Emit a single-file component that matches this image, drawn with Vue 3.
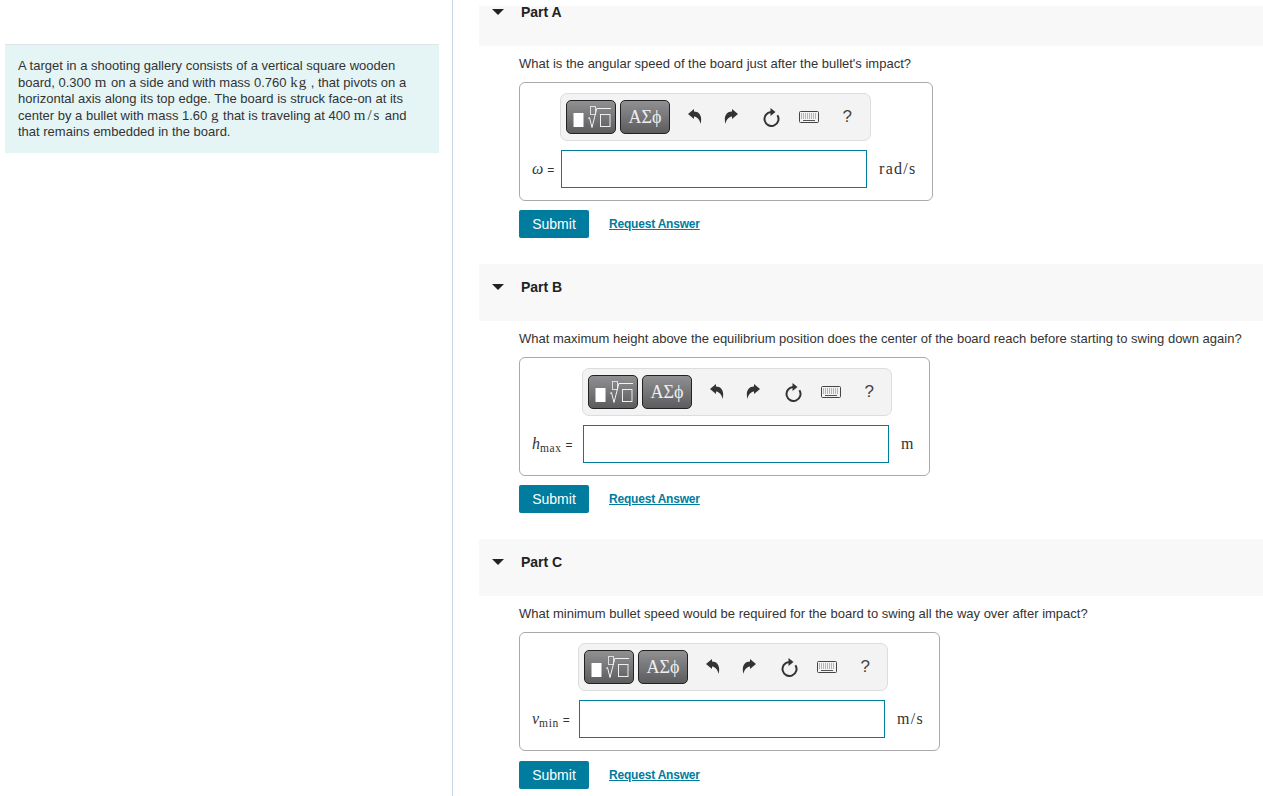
<script setup>
const parts = [
  { id: 'A', cls: 'first', prompt: "What is the angular speed of the board just after the bullet's impact?", sym: 'ω', sub: '', labelW: 22, unit: 'rad/s', boxW: 414, tbW: 311 },
  { id: 'B', cls: '', prompt: 'What maximum height above the equilibrium position does the center of the board reach before starting to swing down again?', sym: 'h', sub: 'max', labelW: 44, unit: 'm', boxW: 411, tbW: 310 },
  { id: 'C', cls: 'last', prompt: 'What minimum bullet speed would be required for the board to swing all the way over after impact?', sym: 'v', sub: 'min', labelW: 40, unit: 'm/s', boxW: 421, tbW: 310 }
]
</script>

<template>
  <div class="page">
    <aside class="left">
      <div class="problem">
        A target in a shooting gallery consists of a vertical square wooden<br />
        board, 0.300 <span class="math">m</span> on a side and with mass 0.760 <span class="math">kg</span> , that pivots on a<br />
        horizontal axis along its top edge. The board is struck face-on at its<br />
        center by a bullet with mass 1.60 <span class="math">g</span> that is traveling at 400 <span class="math wide">m/s</span> and<br />
        that remains embedded in the board.
      </div>
    </aside>
    <main class="right">
      <section v-for="p in parts" :key="p.id" class="part" :class="p.cls">
        <header class="head">
          <span class="tri"></span>
          <span class="title">Part {{ p.id }}</span>
        </header>
        <div class="body">
          <p class="prompt">{{ p.prompt }}</p>
          <div class="box" :style="{ width: p.boxW + 'px' }">
            <div class="toolbar" :style="{ width: p.tbW + 'px', marginLeft: p.labelW + 6 + 'px' }">
              <button class="tbtn">
                <svg width="48" height="32" viewBox="0 0 48 32">
                  <rect x="6.500" y="12" width="10" height="14" fill="#fff" />
                  <rect x="23.500" y="5.500" width="5" height="8" fill="none" stroke="#ddd" />
                  <path d="M21 17.500 L22.500 16.500 L25 26.500 L29.800 7.500 H44" fill="none" stroke="#f2f2f2" stroke-width="1" />
                  <rect x="33.500" y="13.500" width="9.500" height="12" fill="none" stroke="#eee" />
                </svg>
              </button>
              <button class="tbtn greek">ΑΣϕ</button>
              <span class="tool">
                <svg width="16" height="18" viewBox="0 0 16 18"><path d="M2 6 L8 1 V3.500 C14 3.500 16.500 9 14.500 16 C14 12.500 12 9 8 8.500 V11 Z" fill="#333" /></svg>
              </span>
              <span class="tool">
                <svg width="16" height="18" viewBox="0 0 16 18"><path d="M14 6 L8 1 V3.500 C2 3.500 -0.500 9 1.500 16 C2 12.500 4 9 8 8.500 V11 Z" fill="#333" /></svg>
              </span>
              <span class="tool">
                <svg width="18" height="20" viewBox="0 0 18 20">
                  <path d="M9 5 A7 7 0 1 0 15.400 8.200" fill="none" stroke="#333" stroke-width="2" />
                  <path d="M8.500 1 L13.500 5 L8.500 9 Z" fill="#333" />
                </svg>
              </span>
              <span class="tool">
                <svg width="20" height="12" viewBox="0 0 20 12">
                  <rect x="0.500" y="0.500" width="19" height="11" rx="1" fill="#f3f3f3" stroke="#444" />
                  <path d="M2 3 H18 M2 5 H18 M2 7 H18" stroke="#777" stroke-width="1" stroke-dasharray="1 1" />
                  <path d="M4 9.500 H16" stroke="#555" stroke-width="1" />
                </svg>
              </span>
              <span class="tool help">?</span>
            </div>
            <div class="answer">
              <label class="label" :style="{ width: p.labelW + 'px' }">
                <i class="sym">{{ p.sym }}</i><sub v-if="p.sub" class="sub">{{ p.sub }}</sub>
                <span class="eq">=</span>
              </label>
              <input class="field" type="text" />
              <span class="unit">{{ p.unit }}</span>
            </div>
          </div>
          <div class="actions">
            <button class="submit">Submit</button>
            <a class="link">Request Answer</a>
          </div>
        </div>
      </section>
    </main>
  </div>
</template>

<style>
html, body { margin: 0; background: #fff; }
</style>

<style scoped>
.page {
  display: flex;
  height: 796px;
  overflow: hidden;
  font-family: "Liberation Sans", Arial, sans-serif;
  font-size: 13px;
  color: #333;
}
.left {
  box-sizing: border-box;
  width: 453px;
  flex: none;
  padding: 44px 13px 0 5px;
  border-right: 1px solid #c6d6e4;
}
.problem {
  box-sizing: border-box;
  height: 109px;
  padding: 13px 0 0 13px;
  background: #e5f5f6;
  border-top: 1px solid #dfe6e8;
  line-height: 16.500px;
  white-space: nowrap;
}
.math {
  font-family: "Liberation Serif", serif;
  font-size: 15px;
  letter-spacing: 1px;
  line-height: 0;
}
.wide { letter-spacing: 1.900px; }
.right { flex: 1; padding-left: 26px; min-width: 0; }
.head {
  box-sizing: border-box;
  height: 57px;
  padding-top: 14px;
  background: #f8f8f8;
  display: flex;
  align-items: flex-start;
  line-height: 18px;
  font-size: 14px;
}
.first { margin-top: 6px; }
.first .head { height: 40px; padding-top: 0; }
.first .title { margin-top: -3px; }
.first .tri { margin-top: 3px; }
.tri {
  width: 0;
  height: 0;
  margin: 6px 17px 0 13px;
  border-left: 6px solid transparent;
  border-right: 6px solid transparent;
  border-top: 6px solid #222;
}
.title { font-weight: 700; color: #222; }
.body { padding-left: 40px; }
.prompt { margin: 0; padding-top: 9px; line-height: 18px; white-space: nowrap; }
.box {
  box-sizing: border-box;
  height: 119px;
  margin-top: 9px;
  padding: 10px 0 0 12px;
  border: 1px solid #aaa;
  border-radius: 6px;
}
.toolbar {
  box-sizing: border-box;
  display: flex;
  align-items: center;
  height: 48px;
  padding-left: 5px;
  background: #f3f3f3;
  border: 1px solid #ddd;
  border-radius: 7px;
}
.tbtn {
  box-sizing: border-box;
  width: 50px;
  height: 34px;
  margin: 0 4px 0 0;
  padding: 0;
  flex: none;
  display: flex;
  align-items: center;
  justify-content: center;
  border: 1px solid #222;
  border-radius: 5px;
  background: linear-gradient(#909092, #5c5c5e);
  color: #eee;
}
.greek { font: 18px "Liberation Serif", serif; margin-right: 5px; }
.tool {
  width: 38.250px;
  flex: none;
  display: flex;
  align-items: center;
  justify-content: center;
}
.help { font-size: 17px; color: #444; }
.answer { display: flex; align-items: center; margin-top: 9px; }
.label {
  flex: none;
  margin-right: 7px;
  white-space: nowrap;
  font-size: 12px;
}
.sym { font: italic 16px "Liberation Serif", serif; }
.sub {
  font: 11.500px "Liberation Serif", serif;
  letter-spacing: 0.6px;
  vertical-align: -3px;
  line-height: 0;
}
.eq { margin-left: 4px; }
.field {
  box-sizing: border-box;
  width: 306px;
  height: 38px;
  padding: 0;
  flex: none;
  border: 1px solid #007c9e;
  outline: none;
  background: #fff;
}
.unit {
  margin-left: 12px;
  font: 16px "Liberation Serif", serif;
  letter-spacing: 1.300px;
  white-space: nowrap;
}
.actions { display: flex; align-items: center; margin: 9px 0 26px; }
.last .actions { margin-top: 10px; }
.submit {
  box-sizing: border-box;
  width: 70px;
  height: 28px;
  padding: 0;
  border: none;
  border-radius: 2px;
  background: #007c9e;
  color: #fff;
  font: 14px "Liberation Sans", Arial, sans-serif;
}
.link {
  margin-left: 20px;
  color: #007c9e;
  font-size: 12px;
  font-weight: 700;
  text-decoration: underline;
  letter-spacing: -0.2px;
}
</style>
